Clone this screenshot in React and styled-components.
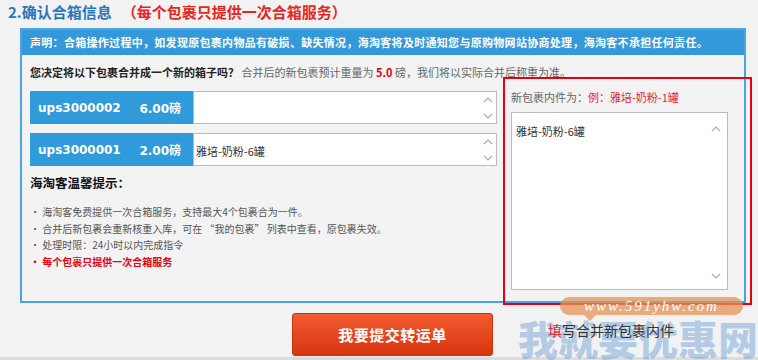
import React from "react";
import styled, { createGlobalStyle } from "styled-components";

const GlobalStyle = createGlobalStyle`
  html, body {
    margin: 0;
    padding: 0;
    background: #f2f2f2;
  }
  body {
    font-family: "Noto Sans CJK SC", "DejaVu Sans", sans-serif;
    color: #333;
  }
`;

const parcels = [
  { id: "ups3000002", weight: "6.00磅", note: "" },
  { id: "ups3000001", weight: "2.00磅", note: "雅培-奶粉-6罐" },
];

const tips = [
  { text: "海淘客免费提供一次合箱服务，支持最大4个包裹合为一件。" },
  { text: "合并后新包裹会重新核重入库，可在 “我的包裹” 列表中查看，原包裹失效。" },
  { text: "处理时限：24小时以内完成指令" },
  { text: "每个包裹只提供一次合箱服务", warn: true },
];

const Chevron = ({ up }) => (
  <svg width="10" height="6" viewBox="0 0 10 6">
    <path
      d={up ? "M1 5 L5 1 L9 5" : "M1 1 L5 5 L9 1"}
      fill="none"
      stroke="#aaa"
      strokeWidth="1.2"
    />
  </svg>
);

export default function App() {
  return (
    <Page>
      <GlobalStyle />
      <Title>
        2.确认合箱信息<TitleNote>（每个包裹只提供一次合箱服务）</TitleNote>
      </Title>

      <Panel>
        <Header>
          声明：合箱操作过程中，如发现原包裹内物品有破损、缺失情况，海淘客将及时通知您与原购物网站协商处理，海淘客不承担任何责任。
        </Header>
        <Body>
          <Question>
            <strong>您决定将以下包裹合并成一个新的箱子吗？</strong>
            <span> 合并后的新包裹预计重量为 </span>
            <Weight>5.0</Weight>
            <span> 磅，我们将以实际合并后称重为准。</span>
          </Question>

          <Columns>
            <LeftCol>
              {parcels.map((p) => (
                <ParcelRow key={p.id}>
                  <ParcelTag>
                    <span>{p.id}</span>
                    <span>{p.weight}</span>
                  </ParcelTag>
                  <NoteBox>
                    <span>{p.note}</span>
                    <Arrows>
                      <Chevron up />
                      <Chevron />
                    </Arrows>
                  </NoteBox>
                </ParcelRow>
              ))}

              <TipTitle>海淘客温馨提示：</TipTitle>
              <TipList>
                {tips.map((t) => (
                  <Tip key={t.text} $warn={t.warn}>
                    · {t.text}
                  </Tip>
                ))}
              </TipList>
            </LeftCol>

            <RightCol>
              <Label>
                新包裹内件为：<Example>例：雅培-奶粉-1罐</Example>
              </Label>
              <BigBox>
                <span>雅培-奶粉-6罐</span>
                <BigArrows>
                  <Chevron up />
                  <Chevron />
                </BigArrows>
              </BigBox>
            </RightCol>
          </Columns>
        </Body>
        <Highlight />
      </Panel>

      <Submit>我要提交转运单</Submit>
      <Strip />

      <Bubble>www.591yhw.com</Bubble>
      <Mark>我就要优惠网</Mark>
      <Hint>
        <em>填</em>写合并新包裹内件
      </Hint>
    </Page>
  );
}

const Page = styled.div`
  position: relative;
  width: 758px;
  height: 360px;
  overflow: hidden;
  background: #f2f2f2;
`;

const Title = styled.h2`
  margin: 0;
  padding: 3px 0 0 8px;
  height: 25px;
  box-sizing: border-box;
  font-size: 15px;
  line-height: 18px;
  font-weight: bold;
  color: #2878c0;
`;

const TitleNote = styled.span`
  color: #e8261f;
  margin-left: 10px;
`;

const Panel = styled.div`
  position: relative;
  margin: 3px 0 0 20px;
  width: 726px;
  border: 2px solid #4ba3df;
  box-sizing: border-box;
`;

const Header = styled.div`
  height: 25px;
  background: #3399db;
  color: #fff;
  font-size: 11px;
  font-weight: bold;
  line-height: 25px;
  padding-left: 8px;
  letter-spacing: 0.3px;
  white-space: nowrap;
`;

const Body = styled.div`
  padding: 10px 0 11px 8px;
  background: #f3f3f3;
`;

const Question = styled.div`
  font-size: 11px;
  line-height: 14px;
  color: #666;
  white-space: nowrap;
  strong {
    color: #222;
  }
`;

const Weight = styled.b`
  color: #e60012;
`;

const Columns = styled.div`
  display: flex;
  gap: 14px;
  margin-top: 12px;
`;

const LeftCol = styled.div`
  width: 467px;
  display: flex;
  flex-direction: column;
`;

const ParcelRow = styled.div`
  display: flex;
  height: 33px;
  margin-bottom: 9px;
`;

const ParcelTag = styled.div`
  width: 163px;
  background: #2f9bdb;
  color: #fff;
  font-size: 12px;
  font-weight: bold;
  font-family: "DejaVu Sans", "Noto Sans CJK SC", sans-serif;
  display: flex;
  justify-content: space-between;
  align-items: center;
  padding: 0 12px 0 8px;
  box-sizing: border-box;
`;

const NoteBox = styled.div`
  flex: 1;
  position: relative;
  background: #fff;
  border: 1px solid #bbb;
  font-size: 11px;
  color: #333;
  padding: 9px 2px;
  box-sizing: border-box;
`;

const Arrows = styled.div`
  position: absolute;
  right: 3px;
  top: 5px;
  bottom: 4px;
  display: flex;
  flex-direction: column;
  justify-content: space-between;
`;

const TipTitle = styled.div`
  font-size: 12.5px;
  font-weight: bold;
  color: #111;
  line-height: 16px;
`;

const TipList = styled.ul`
  list-style: none;
  margin: 13px 0 0;
  padding: 0;
`;

const Tip = styled.li`
  font-size: 10px;
  line-height: 16.5px;
  color: ${(p) => (p.$warn ? "#e60012" : "#555")};
  font-weight: ${(p) => (p.$warn ? "bold" : "normal")};
`;

const RightCol = styled.div`
  width: 217px;
  display: flex;
  flex-direction: column;
`;

const Label = styled.div`
  font-size: 11px;
  line-height: 12px;
  color: #666;
`;

const Example = styled.span`
  color: #e8262f;
`;

const BigBox = styled(NoteBox)`
  height: 178px;
  flex: none;
  margin-top: 9px;
  padding: 10px 4px;
`;

const BigArrows = styled(Arrows)`
  top: 13px;
  bottom: 10px;
  right: 6px;
`;

const Highlight = styled.div`
  position: absolute;
  left: 481px;
  top: 47px;
  width: 249px;
  height: 228px;
  border: 2px solid #e60012;
  box-sizing: border-box;
  pointer-events: none;
`;

const Submit = styled.button`
  display: block;
  margin: 10px 0 0 292px;
  width: 201px;
  height: 43px;
  border: 1px solid #c9340f;
  border-radius: 3px;
  background: linear-gradient(#f25a30, #d8350f);
  color: #fff;
  font-family: "Noto Sans CJK SC", sans-serif;
  font-size: 15px;
  font-weight: bold;
  letter-spacing: 0.5px;
`;

const Strip = styled.div`
  position: absolute;
  left: 0;
  right: 0;
  bottom: 0;
  height: 3px;
  background: #dcdcdc;
`;

const Bubble = styled.div`
  position: absolute;
  left: 560px;
  top: 297px;
  width: 183px;
  height: 18px;
  border-radius: 9px;
  background: rgba(230, 145, 85, 0.75);
  color: #fff;
  font-family: "Liberation Serif", serif;
  font-style: italic;
  font-size: 15px;
  line-height: 18px;
  letter-spacing: 2px;
  text-align: center;
  &::after {
    content: "";
    position: absolute;
    left: 24px;
    bottom: -6px;
    border: 6px solid transparent;
    border-top-color: rgba(230, 145, 85, 0.75);
    border-bottom: 0;
  }
`;

const Mark = styled.div`
  position: absolute;
  left: 518px;
  top: 316px;
  font-size: 40px;
  font-weight: 900;
  line-height: 44px;
  color: rgba(60, 130, 205, 0.35);
  white-space: nowrap;
`;

const Hint = styled.div`
  position: absolute;
  left: 548px;
  top: 321px;
  font-size: 14px;
  line-height: 18px;
  color: #333;
  em {
    font-style: normal;
    color: #e8262f;
  }
`;
